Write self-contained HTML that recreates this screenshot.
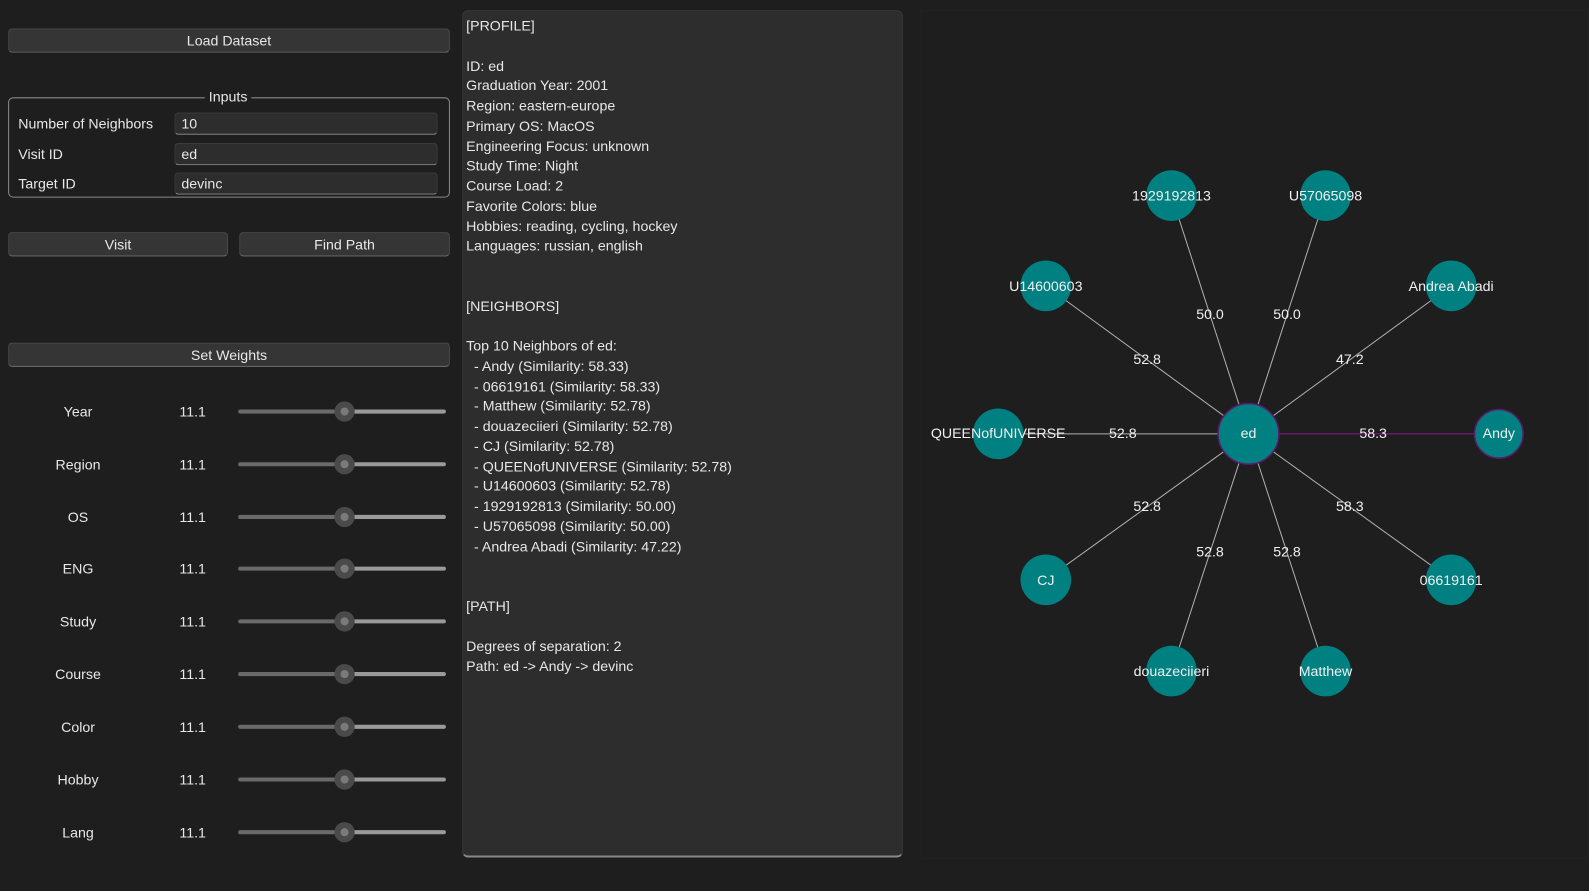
<!DOCTYPE html>
<html><head><meta charset="utf-8"><style>
html,body{margin:0;padding:0;background:#1e1e1e;overflow:hidden;width:1589px;height:891px}
#w{position:absolute;left:0;top:0;width:1568px;height:879px;transform:scale(1.01339,1.01365);transform-origin:0 0;font-family:"Liberation Sans",sans-serif;color:#e8e8e8;font-size:14px}
.btn{position:absolute;background:#353535;border:1px solid #4a4a4a;border-bottom:1px solid #6a6a6a;border-radius:4px;text-align:center;line-height:22px;height:22px;color:#e8e8e8}
.inp{position:absolute;left:172px;width:252px;height:20px;background:#2d2d2d;border:1px solid #3a3a3a;border-bottom:1px solid #8a8a8a;border-radius:4px;line-height:20px;padding-left:6px}
.lbl{position:absolute;left:18px}
.row{position:absolute;left:0;width:450px;height:20px}
.row .n{position:absolute;left:0;width:154px;text-align:center;line-height:20px}
.row .v{position:absolute;left:177px;line-height:20px}
.row .t1{position:absolute;left:235px;top:8px;width:100px;height:4px;background:#6a6a6a;border-radius:2px}
.row .t2{position:absolute;left:345px;top:8px;width:95px;height:4px;background:#9a9a9a;border-radius:2px}
.row .th{position:absolute;left:330px;top:0;width:20px;height:20px;border-radius:50%;background:#4a4a4a}
.row .th:after{content:"";position:absolute;left:6px;top:6px;width:8px;height:8px;border-radius:50%;background:#7a7a7a}
#txt{position:absolute;left:456px;top:10px;width:435px;height:836px;background:#2d2d2d;border:1px solid #383838;border-bottom:2px solid #8a8a8a;border-radius:6px;box-sizing:border-box;padding:5px 3px;white-space:pre;line-height:19.75px;font-size:14px}
#g{position:absolute;left:908px;top:10px;width:660px;height:837px;border:1px solid #222;box-sizing:border-box}
</style></head><body><div id="w">
<div class="btn" style="left:8px;top:28px;width:434px">Load Dataset</div>
<div style="position:absolute;left:8px;top:96px;width:436px;height:99px;border:1px solid #8a8a8a;border-radius:5px;box-sizing:border-box"></div>
<div style="position:absolute;left:202px;top:86px;background:#1e1e1e;padding:0 4px;line-height:18px">Inputs</div>
<div class="lbl" style="top:114px">Number of Neighbors</div><div class="inp" style="top:111px">10</div>
<div class="lbl" style="top:144px">Visit ID</div><div class="inp" style="top:141px">ed</div>
<div class="lbl" style="top:173px">Target ID</div><div class="inp" style="top:170px">devinc</div>
<div class="btn" style="left:8px;top:229px;width:215px">Visit</div>
<div class="btn" style="left:236px;top:229px;width:206px">Find Path</div>
<div class="btn" style="left:8px;top:338px;width:434px">Set Weights</div>
<div class="row" style="top:396px"><div class="n">Year</div><div class="v">11.1</div><div class="t1"></div><div class="t2"></div><div class="th"></div></div>
<div class="row" style="top:448px"><div class="n">Region</div><div class="v">11.1</div><div class="t1"></div><div class="t2"></div><div class="th"></div></div>
<div class="row" style="top:500px"><div class="n">OS</div><div class="v">11.1</div><div class="t1"></div><div class="t2"></div><div class="th"></div></div>
<div class="row" style="top:551px"><div class="n">ENG</div><div class="v">11.1</div><div class="t1"></div><div class="t2"></div><div class="th"></div></div>
<div class="row" style="top:603px"><div class="n">Study</div><div class="v">11.1</div><div class="t1"></div><div class="t2"></div><div class="th"></div></div>
<div class="row" style="top:655px"><div class="n">Course</div><div class="v">11.1</div><div class="t1"></div><div class="t2"></div><div class="th"></div></div>
<div class="row" style="top:707px"><div class="n">Color</div><div class="v">11.1</div><div class="t1"></div><div class="t2"></div><div class="th"></div></div>
<div class="row" style="top:759px"><div class="n">Hobby</div><div class="v">11.1</div><div class="t1"></div><div class="t2"></div><div class="th"></div></div>
<div class="row" style="top:811px"><div class="n">Lang</div><div class="v">11.1</div><div class="t1"></div><div class="t2"></div><div class="th"></div></div>
<div id="txt">[PROFILE]

ID: ed
Graduation Year: 2001
Region: eastern-europe
Primary OS: MacOS
Engineering Focus: unknown
Study Time: Night
Course Load: 2
Favorite Colors: blue
Hobbies: reading, cycling, hockey
Languages: russian, english


[NEIGHBORS]

Top 10 Neighbors of ed:
  - Andy (Similarity: 58.33)
  - 06619161 (Similarity: 58.33)
  - Matthew (Similarity: 52.78)
  - douazeciieri (Similarity: 52.78)
  - CJ (Similarity: 52.78)
  - QUEENofUNIVERSE (Similarity: 52.78)
  - U14600603 (Similarity: 52.78)
  - 1929192813 (Similarity: 50.00)
  - U57065098 (Similarity: 50.00)
  - Andrea Abadi (Similarity: 47.22)


[PATH]

Degrees of separation: 2
Path: ed -&gt; Andy -&gt; devinc</div>
<div id="g"></div>
<svg style="position:absolute;left:0;top:0" width="1568" height="879" font-family="Liberation Sans, sans-serif" font-size="14" fill="#f0f0f0" text-anchor="middle">
<g stroke="#b0b0b0" stroke-width="1">
<line x1="1232" y1="428" x2="1156" y2="193"/><line x1="1232" y1="428" x2="1308" y2="193"/>
<line x1="1232" y1="428" x2="1032" y2="282"/><line x1="1232" y1="428" x2="1432" y2="282"/>
<line x1="1232" y1="428" x2="985" y2="428"/>
<line x1="1232" y1="428" x2="1032" y2="572"/><line x1="1232" y1="428" x2="1432" y2="572"/>
<line x1="1232" y1="428" x2="1156" y2="662"/><line x1="1232" y1="428" x2="1308" y2="662"/>
</g>
<line x1="1232" y1="428" x2="1479" y2="428" stroke="#8a1a8a" stroke-width="1"/>
<g fill="#008080">
<circle cx="1156" cy="193" r="25"/><circle cx="1308" cy="193" r="25"/>
<circle cx="1032" cy="282" r="25"/><circle cx="1432" cy="282" r="25"/>
<circle cx="985" cy="428" r="25"/>
<circle cx="1032" cy="572" r="25"/><circle cx="1432" cy="572" r="25"/>
<circle cx="1156" cy="662" r="25"/><circle cx="1308" cy="662" r="25"/>
<circle cx="1232" cy="428" r="30" stroke="#5a1a6a" stroke-width="1.5"/>
<circle cx="1479" cy="428" r="24" stroke="#5a1a6a" stroke-width="1.5"/>
</g>
<g dominant-baseline="central">
<text x="1156" y="194">1929192813</text><text x="1308" y="194">U57065098</text>
<text x="1032" y="283">U14600603</text><text x="1432" y="283">Andrea Abadi</text>
<text x="985" y="428">QUEENofUNIVERSE</text><text x="1232" y="428">ed</text><text x="1479" y="428">Andy</text>
<text x="1032" y="573">CJ</text><text x="1432" y="573">06619161</text>
<text x="1156" y="663">douazeciieri</text><text x="1308" y="663">Matthew</text>
<text x="1194" y="311">50.0</text><text x="1270" y="311">50.0</text>
<text x="1132" y="355">52.8</text><text x="1332" y="355">47.2</text>
<text x="1108" y="428">52.8</text><text x="1355" y="428">58.3</text>
<text x="1132" y="500">52.8</text><text x="1332" y="500">58.3</text>
<text x="1194" y="545">52.8</text><text x="1270" y="545">52.8</text>
</g>
</svg>
</div></body></html>
